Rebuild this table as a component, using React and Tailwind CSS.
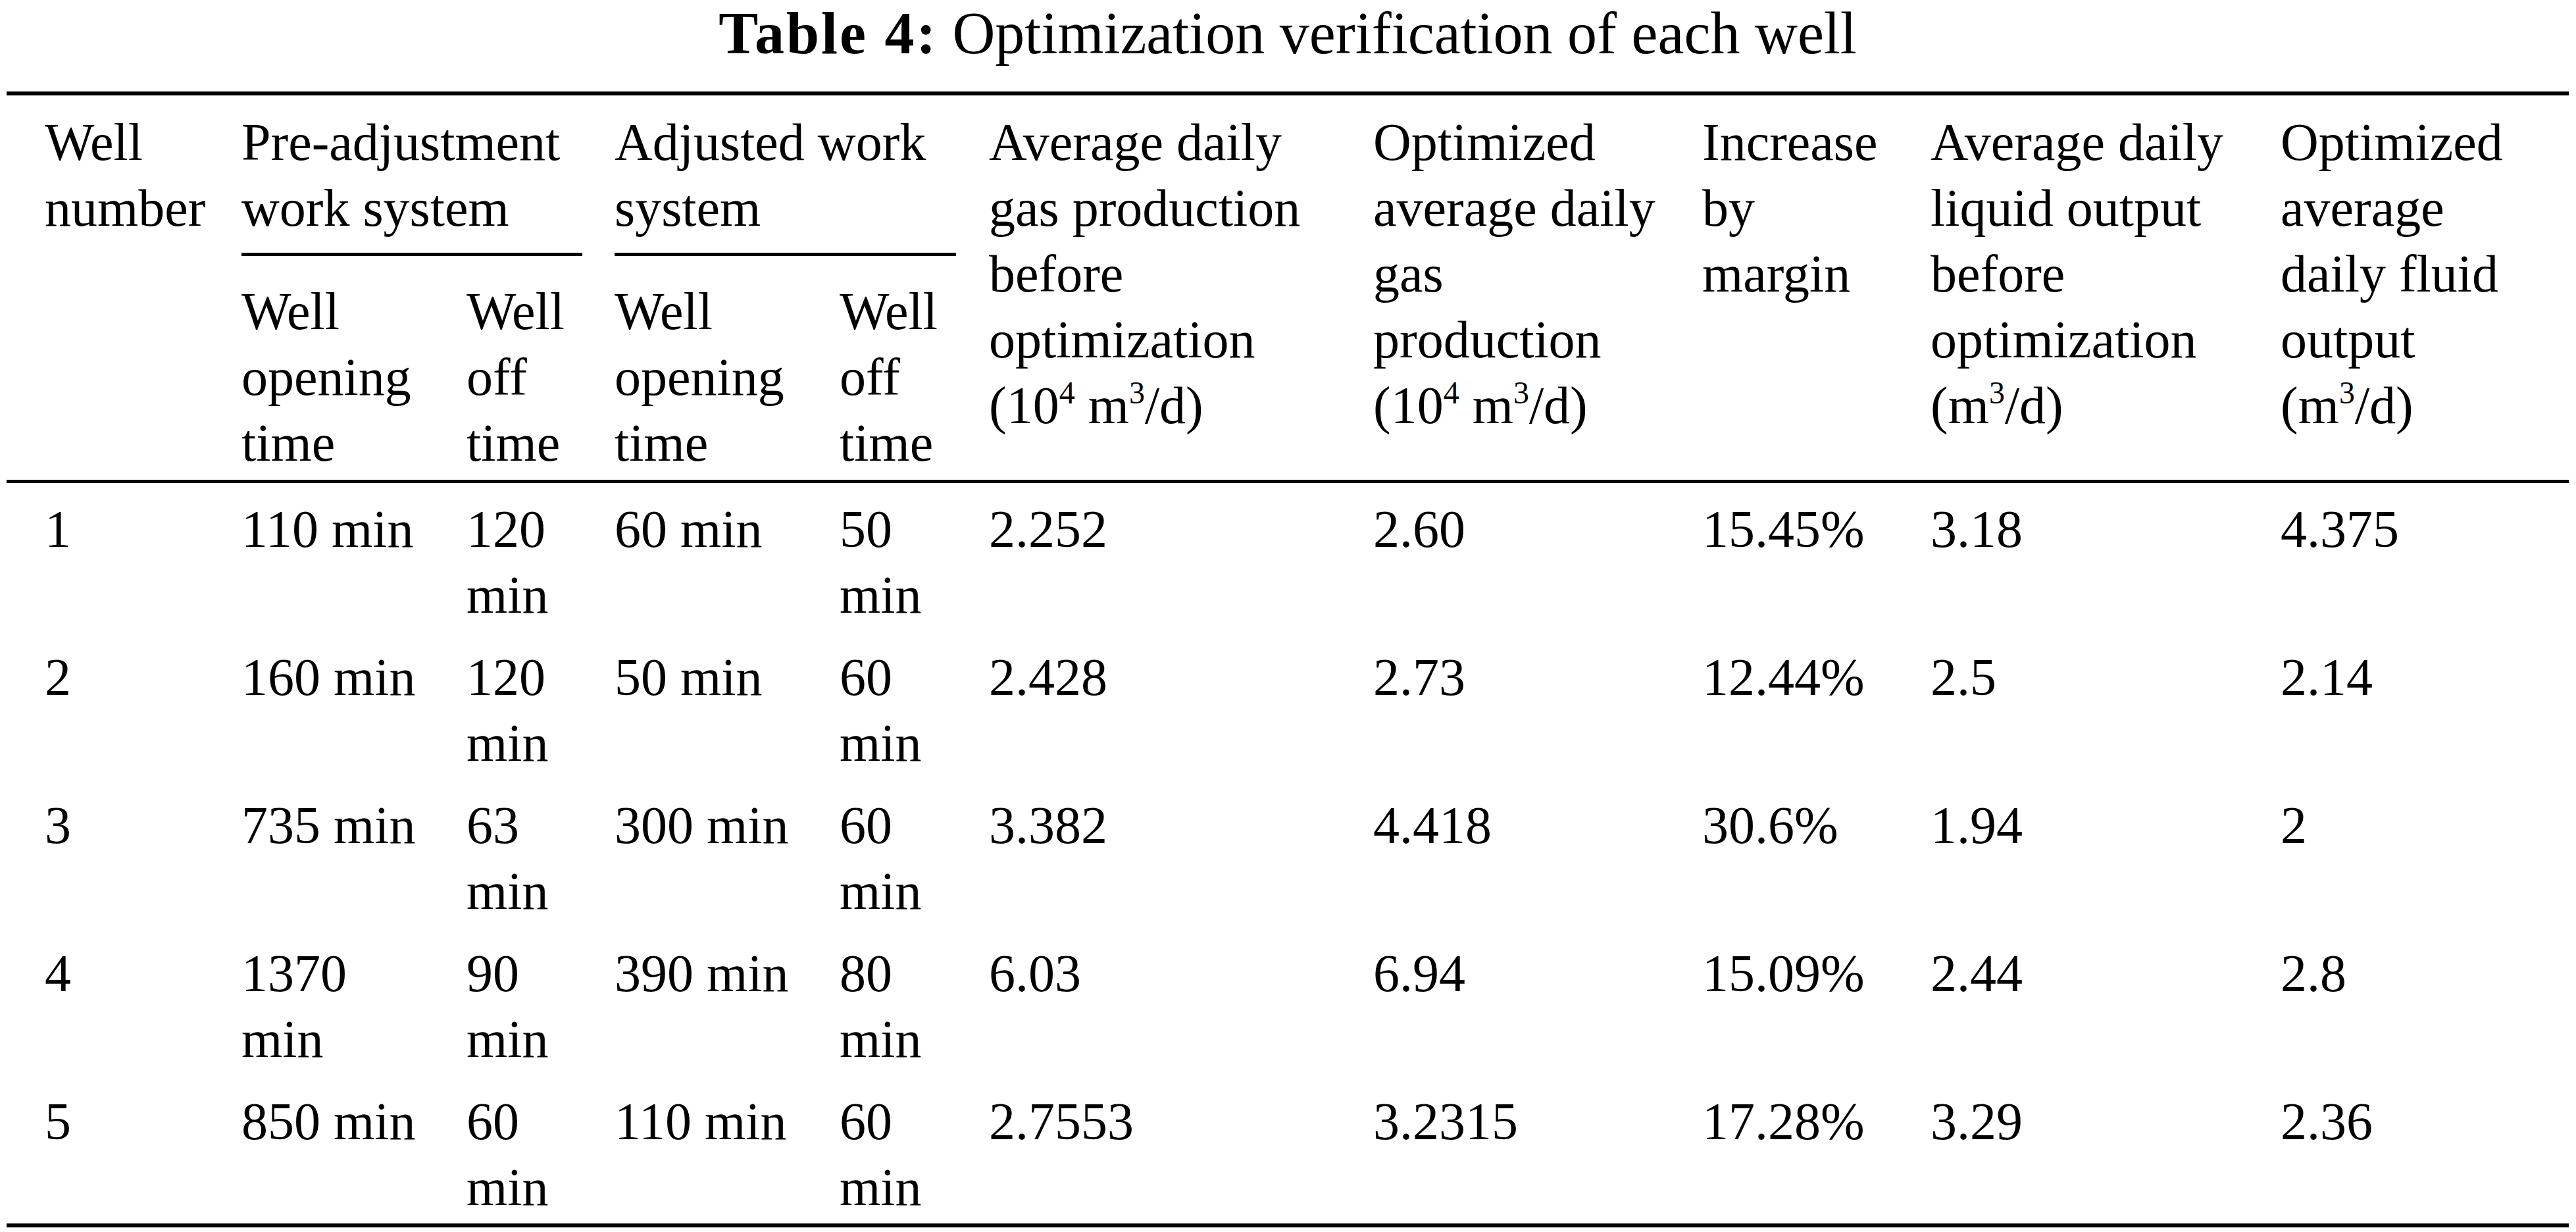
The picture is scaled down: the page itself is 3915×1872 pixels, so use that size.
import React from "react";

const COLS = "grid grid-cols-[299px_342px_225px_342px_227px_584px_500px_347px_532px_1fr] pl-[58px]";

const Unit = ({ ten }) => (
  <>
    ({ten && (
      <>
        10<sup className="text-[48px] top-[-30px]">4</sup>{" "}
      </>
    )}
    m<sup className="text-[48px] top-[-30px]">3</sup>/d)
  </>
);

const ROWS = [
  [["1"], ["110 min"], ["120", "min"], ["60 min"], ["50", "min"], ["2.252"], ["2.60"], ["15.45%"], ["3.18"], ["4.375"]],
  [["2"], ["160 min"], ["120", "min"], ["50 min"], ["60", "min"], ["2.428"], ["2.73"], ["12.44%"], ["2.5"], ["2.14"]],
  [["3"], ["735 min"], ["63", "min"], ["300 min"], ["60", "min"], ["3.382"], ["4.418"], ["30.6%"], ["1.94"], ["2"]],
  [["4"], ["1370", "min"], ["90", "min"], ["390 min"], ["80", "min"], ["6.03"], ["6.94"], ["15.09%"], ["2.44"], ["2.8"]],
  [["5"], ["850 min"], ["60", "min"], ["110 min"], ["60", "min"], ["2.7553"], ["3.2315"], ["17.28%"], ["3.29"], ["2.36"]],
];

function Cell({ lines, className = "" }) {
  return (
    <div className={className}>
      {lines.map((line, i) => (
        <div key={i} className="whitespace-nowrap">
          {line}
        </div>
      ))}
    </div>
  );
}

export default function App() {
  return (
    <div className="min-h-screen bg-white text-black font-['Liberation_Serif',serif] pl-[10px] pr-[11px] pt-[6px]">
      {/* caption */}
      <div className="text-center text-[90px] leading-[90px] whitespace-nowrap">
        <span className="font-bold tracking-[3px]">Table 4:</span>
        <span className="ml-[22px]">Optimization verification of each well</span>
      </div>

      <div className="mt-[43px] border-t-[6px] border-b-[6px] border-black text-[80px] leading-[100px]">
        {/* header */}
        <div className={`${COLS} border-b-[5px] border-black`}>
          <Cell className="row-span-2 pt-[21px]" lines={["Well", "number"]} />
          <Cell
            className="col-span-2 mr-[49px] pt-[21px] pb-[18px] border-b-[5px] border-black"
            lines={["Pre-adjustment", "work system"]}
          />
          <Cell
            className="col-span-2 mr-[50px] pt-[21px] pb-[18px] border-b-[5px] border-black"
            lines={["Adjusted work", "system"]}
          />
          <Cell
            className="row-span-2 pt-[21px]"
            lines={["Average daily", "gas production", "before", "optimization", <Unit ten />]}
          />
          <Cell
            className="row-span-2 pt-[21px]"
            lines={["Optimized", "average daily", "gas", "production", <Unit ten />]}
          />
          <Cell className="row-span-2 pt-[21px]" lines={["Increase", "by", "margin"]} />
          <Cell
            className="row-span-2 pt-[21px]"
            lines={["Average daily", "liquid output", "before", "optimization", <Unit />]}
          />
          <Cell
            className="row-span-2 pt-[21px]"
            lines={["Optimized", "average", "daily fluid", "output", <Unit />]}
          />
          <Cell className="pt-[34px] pb-[6px]" lines={["Well", "opening", "time"]} />
          <Cell className="pt-[34px] pb-[6px]" lines={["Well", "off", "time"]} />
          <Cell className="pt-[34px] pb-[6px]" lines={["Well", "opening", "time"]} />
          <Cell className="pt-[34px] pb-[6px]" lines={["Well", "off", "time"]} />
        </div>

        {/* body */}
        {ROWS.map((row, r) => (
          <div key={r} className={`${COLS} pt-[20px] pb-[5px]`}>
            {row.map((lines, c) => (
              <Cell key={c} lines={lines} />
            ))}
          </div>
        ))}
      </div>
    </div>
  );
}
